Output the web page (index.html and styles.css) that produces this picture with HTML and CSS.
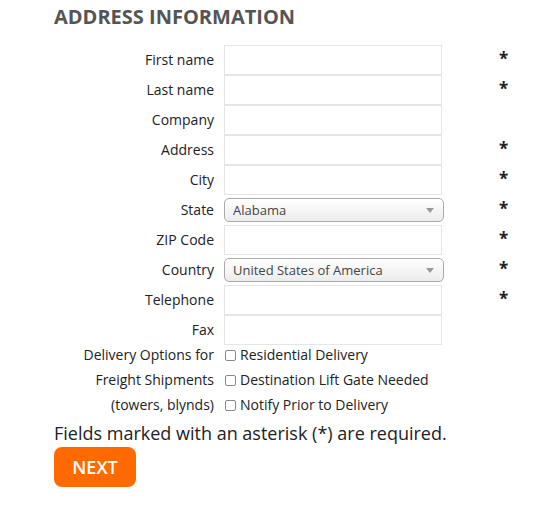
FILE: index.html
```html
<!DOCTYPE html>
<html lang="en">
<head>
  <meta charset="UTF-8" />
  <meta name="viewport" content="width=device-width, initial-scale=1.0">
  <title>Address Information</title>
  <link rel="stylesheet" href="styles.css">
</head>
<body>
<div class="container">
  <h2 class="title">Address Information</h2>

  <form id="addressForm" class="address-form">
    <label for="firstname">First name</label>
    <input type="text" id="firstname" name="firstname">
    <span class="req">*</span>

    <label for="lastname">Last name</label>
    <input type="text" id="lastname" name="lastname">
    <span class="req">*</span>

    <label for="company">Company</label>
    <input type="text" id="company" name="company">
    <span class="req"></span>

    <label for="address">Address</label>
    <input type="text" id="address" name="address">
    <span class="req">*</span>

    <label for="city">City</label>
    <input type="text" id="city" name="city">
    <span class="req">*</span>

    <label for="state">State</label>
    <div class="select-wrap">
      <select id="state" name="state">
        <option>Alabama</option>
        <option>Alaska</option>
        <option>Arizona</option>
      </select>
    </div>
    <span class="req">*</span>

    <label for="zip">ZIP Code</label>
    <input type="text" id="zip" name="zip">
    <span class="req">*</span>

    <label for="country">Country</label>
    <div class="select-wrap">
      <select id="country" name="country">
        <option>United States of America</option>
        <option>Canada</option>
      </select>
    </div>
    <span class="req">*</span>

    <label for="telephone">Telephone</label>
    <input type="text" id="telephone" name="telephone">
    <span class="req">*</span>

    <label for="fax">Fax</label>
    <input type="text" id="fax" name="fax">
    <span class="req"></span>

    <div class="delivery-label">Delivery Options for Freight Shipments (towers, blynds)</div>
    <div class="delivery-options">
      <label class="check"><input type="checkbox" name="residential"> Residential Delivery</label>
      <label class="check"><input type="checkbox" name="liftgate"> Destination Lift Gate Needed</label>
      <label class="check"><input type="checkbox" name="notify"> Notify Prior to Delivery</label>
    </div>
  </form>

  <p class="note">Fields marked with an asterisk (*) are required.</p>
  <button type="submit" form="addressForm" class="next-btn">Next</button>
</div>
</body>
</html>
```

FILE: styles.css
```css
body {
  margin: 0;
  font-family: 'Open Sans', 'Liberation Sans', sans-serif;
  color: #222;
  background: #fff;
}
.container {
  padding: 0 0 0 54px;
}
.title {
  margin: 0;
  padding-top: 4px;
  height: 41px;
  font-size: 20px;
  font-weight: bold;
  text-transform: uppercase;
  color: #555;
  line-height: 26px;
}
.address-form {
  display: grid;
  grid-template-columns: 160px 220px auto;
  grid-auto-rows: 30px;
  column-gap: 10px;
  align-items: center;
}
.address-form > label {
  text-align: right;
  font-size: 14px;
  margin-top: -1px;
}
.address-form input[type="text"] {
  width: 218px;
  height: 30px;
  box-sizing: border-box;
  border: 1px solid #e6e6e6;
  margin: 0;
  padding: 4px 8px;
  font-family: inherit;
  font-size: 13px;
}
.req {
  padding-left: 45px;
  font-size: 17px;
  font-weight: bold;
  line-height: 20px;
  margin-top: -3px;
}
.select-wrap {
  position: relative;
  width: 220px;
  height: 24px;
}
.select-wrap select {
  appearance: none;
  -webkit-appearance: none;
  width: 100%;
  height: 24px;
  box-sizing: border-box;
  border: 1px solid #aaa;
  border-radius: 5px;
  background: linear-gradient(#fff, #ececec);
  padding: 0 8px;
  font-family: inherit;
  font-size: 13px;
  color: #444;
}
.select-wrap::after {
  content: "";
  position: absolute;
  right: 10px;
  top: 10px;
  border-left: 4px solid transparent;
  border-right: 4px solid transparent;
  border-top: 5px solid #999;
  pointer-events: none;
}
.delivery-label {
  grid-row: span 3;
  align-self: start;
  text-align: right;
  font-size: 14px;
  line-height: 25px;
  margin-top: -3px;
}
.delivery-options {
  grid-row: span 3;
  grid-column: span 2;
  align-self: start;
  margin-top: -3px;
  white-space: nowrap;
}
.check {
  display: flex;
  align-items: center;
  gap: 4px;
  font-size: 14px;
  line-height: 25px;
}
.check input {
  appearance: none;
  -webkit-appearance: none;
  width: 11px;
  height: 11px;
  margin: 1px 0 0 1px;
  border: 1px solid #8a8a8a;
  border-radius: 2px;
  background: #fff;
}
.note {
  margin: -14px 0 0 0;
  font-size: 18px;
  line-height: 24px;
}
.next-btn {
  margin-top: 2px;
  width: 82px;
  height: 40px;
  border: none;
  border-radius: 8px;
  background: #ff6a00;
  color: #fff;
  font-family: inherit;
  font-size: 18px;
  font-weight: 600;
  text-transform: uppercase;
  cursor: pointer;
}
.next-btn:hover {
  background: #e85f00;
}
```
